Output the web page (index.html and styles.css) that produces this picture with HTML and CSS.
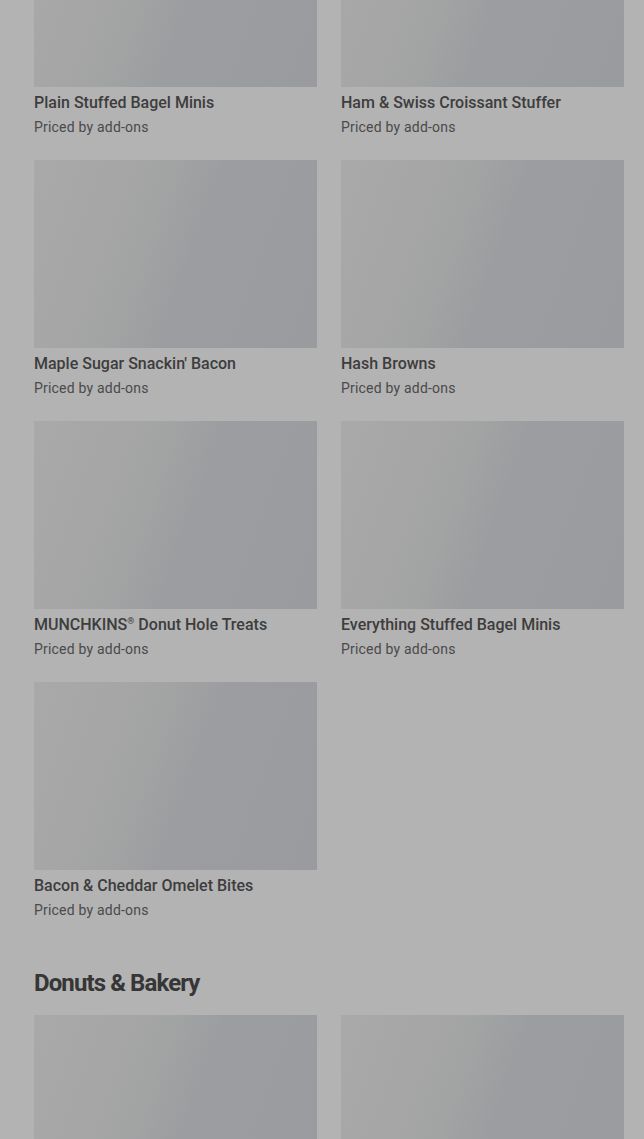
FILE: index.html
```html
<!doctype html>
<html lang="en">
  <head>
    <meta charset="UTF-8" />
    <meta name="viewport" content="width=device-width, initial-scale=1.0" />
    <title>Menu</title>
    <link rel="stylesheet" href="styles.css">
  </head>
  <body>
    <div class="menu">
      <section class="category category-first">
        <div class="item-grid">
          <div class="item">
            <div class="item-image"></div>
            <div class="item-name">Plain Stuffed Bagel Minis</div>
            <div class="item-price">Priced by add-ons</div>
          </div>
          <div class="item">
            <div class="item-image"></div>
            <div class="item-name">Ham &amp; Swiss Croissant Stuffer</div>
            <div class="item-price">Priced by add-ons</div>
          </div>
          <div class="item">
            <div class="item-image"></div>
            <div class="item-name">Maple Sugar Snackin' Bacon</div>
            <div class="item-price">Priced by add-ons</div>
          </div>
          <div class="item">
            <div class="item-image"></div>
            <div class="item-name">Hash Browns</div>
            <div class="item-price">Priced by add-ons</div>
          </div>
          <div class="item">
            <div class="item-image"></div>
            <div class="item-name">MUNCHKINS<sup>®</sup> Donut Hole Treats</div>
            <div class="item-price">Priced by add-ons</div>
          </div>
          <div class="item">
            <div class="item-image"></div>
            <div class="item-name">Everything Stuffed Bagel Minis</div>
            <div class="item-price">Priced by add-ons</div>
          </div>
          <div class="item">
            <div class="item-image"></div>
            <div class="item-name">Bacon &amp; Cheddar Omelet Bites</div>
            <div class="item-price">Priced by add-ons</div>
          </div>
        </div>
      </section>

      <section class="category">
        <h2>Donuts &amp; Bakery</h2>
        <div class="item-grid">
          <div class="item">
            <div class="item-image"></div>
          </div>
          <div class="item">
            <div class="item-image"></div>
          </div>
        </div>
      </section>
    </div>
  </body>
</html>
```

FILE: styles.css
```css
body {
  margin: 0;
  padding: 0;
  font-family: Roboto, "Noto Sans", Arial, sans-serif;
  background-color: #b3b3b3;
  color: #3a3a3a;
  overflow: hidden;
}

.menu {
  padding: 0 20px 0 34px;
}

.category-first {
  margin-top: -101px;
}

.category h2 {
  margin: 47px 0 16px;
  font-size: 24px;
  line-height: 32px;
  font-weight: 700;
  letter-spacing: -0.9px;
  color: #363636;
}

.item-grid {
  display: grid;
  grid-template-columns: 283px 283px;
  column-gap: 24px;
  row-gap: 23px;
}

.item-image {
  height: 188px;
  background: linear-gradient(110deg, #a9a9a9 0%, #a6a6a6 25%, #a2a3a3 40%, #9c9da0 55%, #9a9b9f 100%);
}

.item-name {
  margin-top: 6px;
  font-size: 16px;
  line-height: 20px;
  font-weight: 500;
  color: #3d3d3d;
}

.item-name sup {
  font-size: 9px;
  line-height: 0;
  vertical-align: 6px;
}

.item-price {
  margin-top: 4px;
  font-size: 14px;
  line-height: 20px;
  letter-spacing: 0.2px;
  color: #4a4a4a;
}
```
